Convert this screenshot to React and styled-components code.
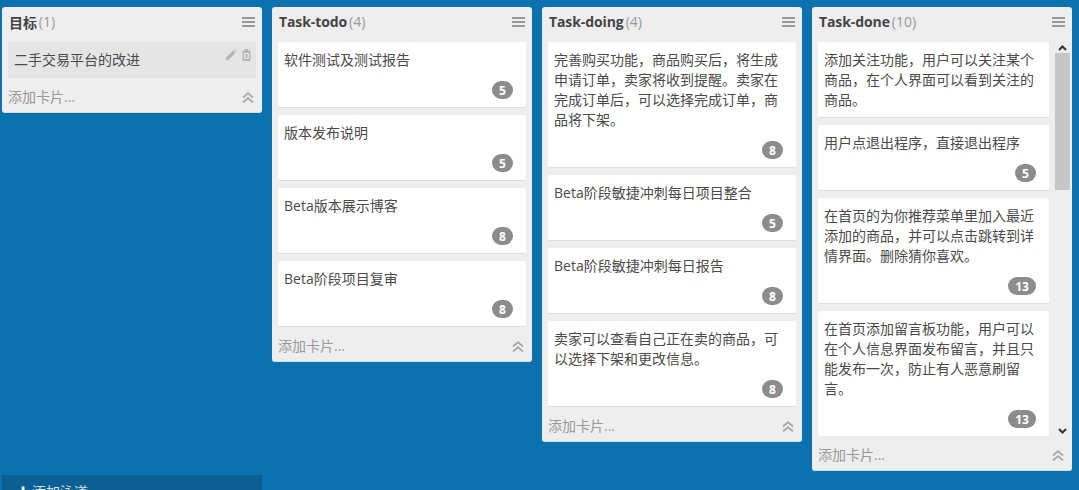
import React from 'react';
import styled, { createGlobalStyle } from 'styled-components';

const GlobalStyle = createGlobalStyle`
  html, body {
    margin: 0;
    padding: 0;
    height: 100%;
    overflow: hidden;
    background: #0c71af;
  }
  * {
    box-sizing: border-box;
  }
`;

const FONT = '"Open Sans", "Liberation Sans", "Noto Sans CJK SC", sans-serif';

const lists = [
  {
    title: '目标',
    count: 1,
    goal: '二手交易平台的改进',
    cards: [],
  },
  {
    title: 'Task-todo',
    count: 4,
    cards: [
      { text: '软件测试及测试报告', points: 5 },
      { text: '版本发布说明', points: 5 },
      { text: 'Beta版本展示博客', points: 8 },
      { text: 'Beta阶段项目复审', points: 8 },
    ],
  },
  {
    title: 'Task-doing',
    count: 4,
    cards: [
      {
        text: '完善购买功能，商品购买后，将生成申请订单，卖家将收到提醒。卖家在完成订单后，可以选择完成订单，商品将下架。',
        points: 8,
      },
      { text: 'Beta阶段敏捷冲刺每日项目整合', points: 5 },
      { text: 'Beta阶段敏捷冲刺每日报告', points: 8 },
      { text: '卖家可以查看自己正在卖的商品，可以选择下架和更改信息。', points: 8 },
    ],
  },
  {
    title: 'Task-done',
    count: 10,
    scroll: true,
    cards: [
      { text: '添加关注功能，用户可以关注某个商品，在个人界面可以看到关注的商品。' },
      { text: '用户点退出程序，直接退出程序', points: 5 },
      { text: '在首页的为你推荐菜单里加入最近添加的商品，并可以点击跳转到详情界面。删除猜你喜欢。', points: 13 },
      { text: '在首页添加留言板功能，用户可以在个人信息界面发布留言，并且只能发布一次，防止有人恶意刷留言。', points: 13 },
    ],
  },
];

const MenuIcon = () => (
  <svg width="13" height="11" viewBox="0 0 13 11">
    <rect y="0" width="13" height="2" fill="#999" />
    <rect y="4" width="13" height="2" fill="#999" />
    <rect y="8" width="13" height="2" fill="#999" />
  </svg>
);

const CollapseIcon = () => (
  <svg width="12" height="11" viewBox="0 0 12 11" fill="none" stroke="#aaa" strokeWidth="1.8">
    <path d="M1 5.5 L6 1.2 L11 5.5" />
    <path d="M1 10.5 L6 6.2 L11 10.5" />
  </svg>
);

const PencilIcon = () => (
  <svg width="12" height="12" viewBox="0 0 12 12">
    <path d="M0.5 11.5 L1.2 8.4 L8 1.6 L10.4 4 L3.6 10.8 Z M8.8 0.8 L9.6 0.2 L11.8 2.4 L11.2 3.2 Z" fill="#b5b5b5" />
  </svg>
);

const TrashIcon = () => (
  <svg width="9" height="12" viewBox="0 0 9 12">
    <path d="M3 0 H6 V1.5 H8.5 V11.2 Q8.5 12 7.7 12 H1.3 Q0.5 12 0.5 11.2 V1.5 H3 Z M2 4 V10 H7 V4 Z" fill="#b5b5b5" fillRule="evenodd" />
    <rect x="3.5" y="5" width="2" height="4" fill="#b5b5b5" />
  </svg>
);

const Column = ({ list }) => (
  <ListPanel>
    <ListHeader>
      <ListTitle>{list.title}</ListTitle>
      <ListCount>({list.count})</ListCount>
      <MenuSlot>
        <MenuIcon />
      </MenuSlot>
    </ListHeader>
    {list.goal && (
      <GoalCard>
        {list.goal}
        <GoalTools>
          <PencilIcon />
          <TrashIcon />
        </GoalTools>
      </GoalCard>
    )}
    {list.cards.length > 0 && (
      <CardArea>
        <CardStack $scroll={list.scroll}>
          {list.cards.map((card) => (
            <Card key={card.text} $compact={!card.points}>
              <CardText>{card.text}</CardText>
              {card.points && (
                <CardFoot>
                  <Points $wide={card.points > 9}>{card.points}</Points>
                </CardFoot>
              )}
            </Card>
          ))}
        </CardStack>
        {list.scroll && (
          <ScrollBar>
            <ScrollArrow viewBox="0 0 9 6">
              <path d="M1 5 L4.5 1.5 L8 5" />
            </ScrollArrow>
            <ScrollTrack>
              <ScrollThumb />
            </ScrollTrack>
            <ScrollArrow viewBox="0 0 9 6">
              <path d="M1 1 L4.5 4.5 L8 1" />
            </ScrollArrow>
          </ScrollBar>
        )}
      </CardArea>
    )}
    <ListFooter>
      <AddCard>添加卡片...</AddCard>
      <CollapseSlot>
        <CollapseIcon />
      </CollapseSlot>
    </ListFooter>
  </ListPanel>
);

const App = () => (
  <Board>
    <GlobalStyle />
    <Lanes>
      {lists.map((list) => (
        <Column key={list.title} list={list} />
      ))}
    </Lanes>
    <AddLane>
      <Plus>✚</Plus>添加泳道
    </AddLane>
  </Board>
);

export default App;

const Board = styled.div`
  position: relative;
  width: 1079px;
  height: 490px;
  overflow: hidden;
  background: #0c71af;
  font-family: ${FONT};
  font-size: 14px;
  color: #4a4a4a;
`;

const Lanes = styled.div`
  display: flex;
  align-items: flex-start;
  gap: 10px;
  padding: 7px 0 0 2px;
`;

const ListPanel = styled.section`
  width: 260px;
  flex: none;
  background: #eeeeee;
  border-radius: 3px;
  border-bottom: 1px solid #d5dde2;
`;

const ListHeader = styled.header`
  display: flex;
  align-items: center;
  height: 35px;
  padding: 0 7px 6px 7px;
`;

const ListTitle = styled.span`
  font-size: 14px;
  font-weight: 700;
  letter-spacing: -0.1px;
  color: #444;
`;

const ListCount = styled.span`
  margin-left: 2px;
  font-size: 14px;
  color: #999;
`;

const MenuSlot = styled.span`
  display: flex;
  margin-left: auto;
  padding-top: 2px;
`;

const GoalCard = styled.div`
  position: relative;
  display: flex;
  align-items: center;
  height: 36px;
  margin: 0 6px;
  padding: 0 6px 2px;
  background: #e5e5e5;
  border-bottom: 1px solid #dddddd;
  border-radius: 2px;
  font-size: 14px;
`;

const GoalTools = styled.div`
  position: absolute;
  top: 7px;
  right: 5px;
  display: flex;
  gap: 5px;
`;

const CardArea = styled.div`
  display: flex;
  padding-left: 6px;
`;

const CardStack = styled.div`
  display: flex;
  flex-direction: column;
  gap: 7px;
  width: ${(p) => (p.$scroll ? '231px' : '248px')};
  ${(p) => p.$scroll && 'height: 394px; overflow: hidden;'}
`;

const Card = styled.article`
  display: flex;
  flex: none;
  flex-direction: column;
  padding: 8px 6px ${(p) => (p.$compact ? '7px' : '8px')};
  background: #ffffff;
  border-radius: 2px;
  border-bottom: 1px solid #dddddd;
`;

const CardText = styled.div`
  padding-right: 4px;
  font-size: 14px;
  line-height: 20px;
  min-height: 20px;
`;

const CardFoot = styled.div`
  display: flex;
  justify-content: flex-end;
  margin-top: 11px;
  padding-right: 7px;
`;

const Points = styled.span`
  display: flex;
  align-items: center;
  justify-content: center;
  width: ${(p) => (p.$wide ? '28px' : '21px')};
  height: 18px;
  border-radius: 9px;
  background: #8c8c8c;
  color: #ffffff;
  font-size: 12px;
  font-weight: 700;
`;

const ScrollBar = styled.div`
  display: flex;
  flex-direction: column;
  align-items: center;
  width: 15px;
  margin-left: 6px;
`;

const ScrollArrow = styled.svg`
  flex: none;
  width: 9px;
  height: 6px;
  margin: 3px 0 2px;
  fill: none;
  stroke: #333;
  stroke-width: 2;
`;

const ScrollTrack = styled.div`
  flex: 1;
  width: 100%;
`;

const ScrollThumb = styled.div`
  width: 100%;
  height: 137px;
  background: #c6c6c6;
`;

const ListFooter = styled.footer`
  display: flex;
  align-items: center;
  justify-content: space-between;
  height: 34px;
  padding: 0 8px 0 6px;
`;

const AddCard = styled.span`
  padding-top: 1px;
  font-size: 14px;
  color: #999;
`;

const CollapseSlot = styled.span`
  display: flex;
  padding-top: 4px;
`;

const AddLane = styled.div`
  position: absolute;
  left: 2px;
  top: 475px;
  width: 260px;
  height: 30px;
  padding: 6px 0 0 15px;
  background: #0b5f93;
  color: #cfe3ef;
  font-size: 14px;
`;

const Plus = styled.span`
  margin-right: 3px;
  font-size: 12px;
  color: #ffffff;
`;
